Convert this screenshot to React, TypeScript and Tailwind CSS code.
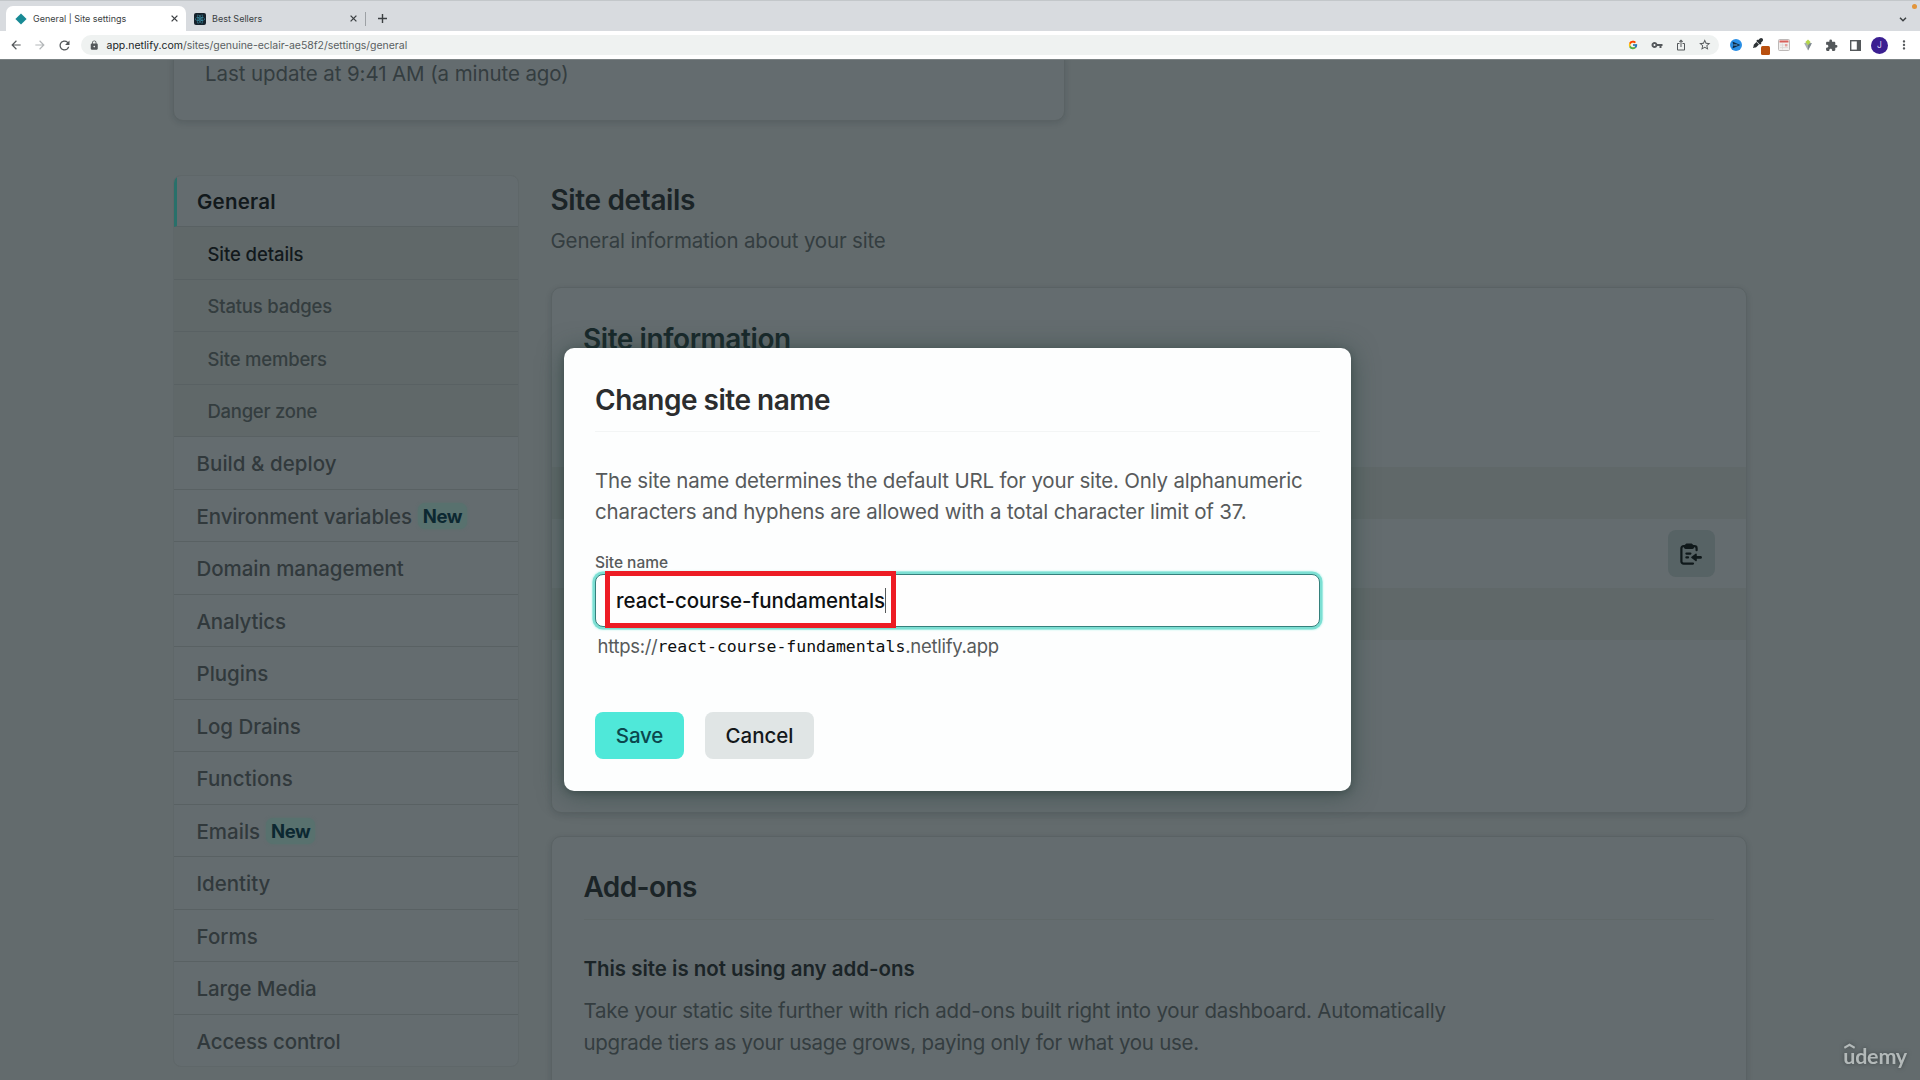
import React from 'react';
import {
  MdArrowBack,
  MdArrowForward,
  MdRefresh,
  MdLock,
  MdVpnKey,
  MdIosShare,
  MdStarBorder,
  MdExtension,
  MdMoreVert,
} from 'react-icons/md';
import { FcGoogle } from 'react-icons/fc';
import { FaReact, FaEyeDropper } from 'react-icons/fa';

type NavItem = { label: string; tracking: string; badge?: boolean };

const subItems: NavItem[] = [
  { label: 'Status badges', tracking: 'tracking-[-0.0105em]' },
  { label: 'Site members', tracking: 'tracking-[-0.0105em]' },
  { label: 'Danger zone', tracking: 'tracking-[-0.0148em]' },
];

const items: NavItem[] = [
  { label: 'Build & deploy', tracking: 'tracking-[0.002em]' },
  { label: 'Environment variables', tracking: 'tracking-[-0.0057em]', badge: true },
  { label: 'Domain management', tracking: 'tracking-[-0.0025em]' },
  { label: 'Analytics', tracking: 'tracking-[-0.009em]' },
  { label: 'Plugins', tracking: 'tracking-[-0.001em]' },
  { label: 'Log Drains', tracking: 'tracking-[-0.003em]' },
  { label: 'Functions', tracking: 'tracking-[0.003em]' },
  { label: 'Emails', tracking: 'tracking-[0em]', badge: true },
  { label: 'Identity', tracking: 'tracking-[-0.001em]' },
  { label: 'Forms', tracking: 'tracking-[0.002em]' },
  { label: 'Large Media', tracking: 'tracking-[-0.0052em]' },
  { label: 'Access control', tracking: 'tracking-[-0.0076em]' },
];

function CloseIcon() {
  return (
    <svg className="size-[7px]" viewBox="0 0 7 7" stroke="#3c4043" strokeWidth="1.3">
      <path d="M0.6 0.6 6.4 6.4M6.4 0.6 0.6 6.4" />
    </svg>
  );
}

function TabStrip() {
  return (
    <div className="flex h-[31px] items-end border-t border-[#c3c7ca] bg-[#d8dbdf] pl-[6px] text-[9px] text-[#3a3e42]">
      <div className="flex h-[25px] w-[180px] items-center rounded-t-[7px] bg-white pr-[8px] pl-[9px]">
        <svg className="size-[12px]" viewBox="0 0 12 12">
          <path d="M6 0.4 11.6 6 6 11.6 0.4 6Z" fill="#188a95" />
        </svg>
        <span className="ml-[6px] flex-1 whitespace-nowrap">General | Site settings</span>
        <CloseIcon />
      </div>
      <div className="flex h-[25px] w-[179px] items-center pr-[8px] pl-[8px]">
        <span className="flex size-[12px] items-center justify-center rounded-[2px] bg-[#16212b]">
          <FaReact className="size-[10px] text-[#3f9fb8]" />
        </span>
        <span className="ml-[6px] flex-1">Best Sellers</span>
        <CloseIcon />
      </div>
      <div className="mb-[5px] h-[14px] w-px bg-[#9da1a5]" />
      <svg className="mb-[8px] ml-[12px] size-[9px]" viewBox="0 0 9 9" stroke="#3c4043" strokeWidth="1.4">
        <path d="M4.5 0V9M0 4.5H9" />
      </svg>
      <div className="ml-auto flex h-[29px] w-[24px] flex-col items-center pt-[2px]">
        <span className="ml-[13px] size-[5px] rounded-full bg-[#e2953a]" />
        <svg className="mt-[8px] mr-[10px] h-[5px] w-[8px]" viewBox="0 0 8 5" fill="none" stroke="#3c4043" strokeWidth="1.5">
          <path d="M1 0.8 4 3.8 7 0.8" />
        </svg>
      </div>
    </div>
  );
}

function Cell({ children }: { children: React.ReactNode }) {
  return <div className="flex w-[24px] items-center justify-center">{children}</div>;
}

function Toolbar() {
  return (
    <div className="flex h-[28px] items-center bg-white pl-[4px] text-[#54585b]">
      <Cell>
        <MdArrowBack className="size-[14px]" />
      </Cell>
      <Cell>
        <MdArrowForward className="size-[14px] text-[#b4b7b9]" />
      </Cell>
      <Cell>
        <MdRefresh className="size-[15px]" />
      </Cell>
      <div className="ml-[5px] flex h-[20px] w-[1638px] items-center rounded-full bg-[#eff2f1] pr-[2px] pl-[8px]">
        <MdLock className="size-[10.5px]" />
        <p className="ml-[7px] flex-1 pt-px text-[10.5px] leading-[20px] text-[#5a5f62]">
          <span className="text-[#202427]">app.netlify.com</span>
          <span className="tracking-[-0.0035em]">/sites/genuine-eclair-ae58f2/settings/general</span>
        </p>
        <Cell>
          <FcGoogle className="size-[10px]" />
        </Cell>
        <Cell>
          <MdVpnKey className="size-[12px]" />
        </Cell>
        <Cell>
          <MdIosShare className="size-[12px]" />
        </Cell>
        <Cell>
          <MdStarBorder className="size-[13.5px]" />
        </Cell>
      </div>
      <div className="ml-[4.5px] flex h-full">
        <Cell>
          <svg className="size-[12px]" viewBox="0 0 12 12">
            <circle cx="6" cy="6" r="6" fill="#2a8fe6" />
            <path d="M2.4 2.4 10.4 6 2.4 9.6 3.4 6Z" fill="#0f2a44" />
            <path d="M3.6 6H7.4" stroke="#5fb0f0" strokeWidth="1" />
          </svg>
        </Cell>
        <Cell>
          <div className="relative size-[14px]">
            <FaEyeDropper className="size-[10px] text-[#2e3336]" />
            <span className="absolute top-[8px] left-[8px] size-[9px] rounded-[1.5px] bg-[#b9500f]" />
          </div>
        </Cell>
        <Cell>
          <svg className="size-[12px]" viewBox="0 0 12 12">
            <rect x="0.5" y="0.5" width="11" height="11" rx="1" fill="#f1efee" stroke="#bdb9b8" />
            <rect x="1.5" y="1.5" width="9" height="2" fill="#d8605a" />
            <path d="M2 6H10M2 8.5H10M4.5 4.5V10.5" stroke="#dcd7d4" strokeWidth="0.8" />
            <rect x="7" y="5" width="2.4" height="2.4" fill="#e6a19c" />
          </svg>
        </Cell>
        <Cell>
          <svg className="size-[12px]" viewBox="0 0 12 12">
            <path d="M6 3 9.8 4.2 6 11.6 2.2 4.2Z" fill="#a8b0b4" />
            <path d="M6 4.6V11.6L9.8 4.2Z" fill="#7f898e" />
            <path d="M6 0.6 8.6 3 6 6.2 3.4 3Z" fill="#b5d64a" />
          </svg>
        </Cell>
        <Cell>
          <MdExtension className="size-[13px]" />
        </Cell>
        <Cell>
          <svg className="size-[11px]" viewBox="0 0 11 11">
            <rect x="0.7" y="0.7" width="9.6" height="9.6" fill="none" stroke="#54585b" strokeWidth="1.4" />
            <rect x="6.8" y="0.7" width="3.5" height="9.6" fill="#54585b" />
          </svg>
        </Cell>
        <Cell>
          <span className="flex size-[17px] items-center justify-center rounded-full bg-[#3b1f91] text-[8.5px] text-[#d8d0f0]">
            J
          </span>
        </Cell>
        <Cell>
          <MdMoreVert className="size-[14px]" />
        </Cell>
      </div>
    </div>
  );
}

function Badge() {
  return (
    <span className="-mt-[2px] ml-[6px] flex h-[26px] items-center rounded-[7px] bg-[#58716e] px-[5px] pt-px text-[18.5px] font-bold tracking-[-0.0235em] text-[#0c2831] shadow-[0_0_3px_#58716e]">
      New
    </span>
  );
}

function Sidebar() {
  return (
    <nav className="w-[346px] shrink-0 overflow-hidden rounded-[8px] border border-[#5f6769] bg-[#646c6f]">
      <div className="flex h-[51.5px] items-center border-b border-l-[3px] border-b-[#596163] border-l-[#29706a] pt-[3px] pl-[20px] text-[20.5px] font-semibold tracking-[0.012em] text-[#12191c]">
        General
      </div>
      <div className="flex h-[52.5px] items-center border-b border-[#596163] bg-[#606869] pt-[4px] pl-[33.5px] text-[18.5px] font-medium tracking-[-0.0046em] text-[#12191c]">
        Site details
      </div>
      {subItems.map((item) => (
        <div
          key={item.label}
          className={`flex h-[52.5px] items-center border-b border-[#596163] bg-[#606869] pt-[3.5px] pl-[33.5px] text-[18.5px] font-medium text-[#343d3f] ${item.tracking}`}
        >
          {item.label}
        </div>
      ))}
      {items.map((item) => (
        <div
          key={item.label}
          className={`flex h-[52.5px] items-center border-b border-[#596163] pt-[4px] pl-[22.5px] text-[20.5px] font-medium text-[#31393c] last:h-[51.5px] last:border-b-0 ${item.tracking}`}
        >
          {item.label}
          {item.badge && <Badge />}
        </div>
      ))}
    </nav>
  );
}

function ClipboardIcon() {
  return (
    <svg className="size-[22px]" viewBox="0 0 22 22" fill="none" stroke="#10191b" strokeWidth="2.2" strokeLinecap="round" strokeLinejoin="round">
      <path d="M5 3.2H3.6A2.2 2.2 0 0 0 1.4 5.4V18.4A2.2 2.2 0 0 0 3.6 20.6H13" />
      <path d="M12.6 3.2H14.4A2.2 2.2 0 0 1 16.6 5.4V7.2" />
      <path d="M6.4 0.4H11.6L14 2.4V4.2Q14 6 12.4 6H5.6Q4 6 4 4.2V2.4Z" fill="#10191b" stroke="none" />
      <path d="M6.4 10.6H10.4M6.4 14.4H8" />
      <path d="M15 14.4H20.6" strokeWidth="2.6" />
      <path d="M16 11.4 12 14.4 16 17.4Z" fill="#10191b" strokeWidth="1.6" />
    </svg>
  );
}

function Details() {
  return (
    <main className="ml-[31.5px] w-[1196px] shrink-0 pt-[4px]">
      <h2 className="text-[28px] leading-[43px] font-semibold tracking-[-0.0131em] text-[#1b2427]">Site details</h2>
      <p className="mt-[3px] text-[20.5px] leading-[31.5px] tracking-[-0.0085em] text-[#343d40]">
        General information about your site
      </p>
      <section className="mt-[31px] h-[526px] rounded-[10px] border border-[#5a6264] bg-[#646c6f] pt-[30px] shadow-[0_2px_6px_rgba(14,30,37,0.14)]">
        <h3 className="pl-[31.5px] text-[28px] leading-[42px] font-semibold tracking-[-0.0153em] text-[#18282a]">
          Site information
        </h3>
        <div className="mt-[107px] h-[52px] bg-[#606869]" />
        <div className="flex h-[69px] items-center justify-end pr-[31px]">
          <div className="flex size-[47px] items-center justify-center rounded-[8px] bg-[#576365]">
            <ClipboardIcon />
          </div>
        </div>
        <div className="h-[52px] bg-[#606869]" />
      </section>
      <section className="mt-[22.5px] h-[300px] rounded-[10px] border border-[#5a6264] bg-[#646c6f] px-[32px] pt-[29.5px] shadow-[0_2px_6px_rgba(14,30,37,0.14)]">
        <h3 className="border-b border-[#606869] pb-[10px] text-[28px] leading-[43px] font-semibold tracking-[-0.0214em] text-[#1b2427]">
          Add-ons
        </h3>
        <p className="mt-[32.5px] text-[20.5px] leading-[31.5px] font-semibold tracking-[-0.0013em] text-[#1b2427]">
          This site is not using any add-ons
        </p>
        <p className="mt-[11px] text-[20.5px] leading-[31.5px] whitespace-nowrap text-[#343d40]">
          <span className="tracking-[-0.01em]">
            Take your static site further with rich add-ons built right into your dashboard. Automatically
          </span>
          <br />
          <span className="tracking-[-0.0135em]">upgrade tiers as your usage grows, paying only for what you use.</span>
        </p>
      </section>
    </main>
  );
}

function ChangeNameDialog() {
  return (
    <div className="absolute top-[348px] left-[563.5px] h-[442.5px] w-[787.5px] rounded-[10px] bg-[#fdfefe] px-[31.5px] pt-[31px] shadow-[0_3px_26px_rgba(40,66,60,0.6),0_2px_6px_rgba(40,56,54,0.4)]">
      <h2 className="border-b border-[#f3f5f5] pb-[9px] text-[28px] leading-[43px] font-semibold tracking-[-0.0178em] text-[#2b2d2e]">
        Change site name
      </h2>
      <p className="mt-[32.5px] text-[20.5px] leading-[31.5px] whitespace-nowrap text-[#575a5b]">
        <span className="tracking-[-0.0095em]">
          The site name determines the default URL for your site. Only alphanumeric
        </span>
        <br />
        <span className="tracking-[-0.0092em]">
          characters and hyphens are allowed with a total character limit of 37.
        </span>
      </p>
      <p className="mt-[22px] pt-px text-[15.5px] leading-[24px] font-medium tracking-[-0.002em] text-[#575a5b]">Site name</p>
      <div className="relative -mt-[0.5px] flex h-[52.5px] items-center rounded-[8px] border border-[#35807c] bg-[#fefefe] pl-[20px] shadow-[0_0_0_2.5px_#7cdfd3,0_0_2px_3px_#b9f3ec]">
        <span className="pt-px text-[20.5px] leading-[28px] font-medium tracking-[-0.0032em] text-[#0f1112]">
          react-course-fundamentals
        </span>
        <span className="h-[25px] w-px bg-[#55595a]" />
        <div className="absolute -top-[4px] left-[9px] h-[57px] w-[291px] border-[5px] border-[#ed1c24]" />
      </div>
      <p className="mt-[5.5px] flex pl-[2.5px] text-[18.5px] leading-[28px] text-[#575a5b]">
        <span className="tracking-[-0.0168em]">https://</span>
        <span className="pt-px font-['DejaVu_Sans_Mono',monospace] text-[16.5px] tracking-[-0.001em] text-[#0c0e0f]">
          react-course-fundamentals
        </span>
        <span className="tracking-[-0.0154em]">.netlify.app</span>
      </p>
      <div className="mt-[50.5px] flex gap-[21px] text-[20.5px] font-medium">
        <div className="flex h-[47px] w-[89px] items-center justify-center rounded-[8px] bg-[#4fe8d9] pt-[2px] tracking-[-0.0074em] text-[#0b474d]">
          Save
        </div>
        <div className="flex h-[47px] w-[109px] items-center justify-center rounded-[8px] bg-[#e0e5e5] pt-[2px] text-[#14181a]">
          Cancel
        </div>
      </div>
    </div>
  );
}

function Watermark() {
  return (
    <div className="absolute right-[13px] bottom-[12px] flex h-[27px] items-end text-[#b3b9b9] drop-shadow-[0_0_2px_rgba(50,58,60,0.8)]">
      <svg className="absolute top-[2px] left-[1px] h-[6px] w-[11px]" viewBox="0 0 11 6" fill="none" stroke="currentColor" strokeWidth="2.2">
        <path d="M0.3 4.8 5.5 1.8 10.7 4.8" />
      </svg>
      <span className="font-['Lato',sans-serif] text-[21.5px] leading-[23px] font-bold tracking-[-0.01em]">udemy</span>
    </div>
  );
}

export default function App() {
  return (
    <div className="relative flex h-[1080px] w-[1920px] flex-col overflow-hidden bg-[#636b6d] font-['Inter',sans-serif]">
      <TabStrip />
      <Toolbar />
      <div className="h-[1021px] overflow-hidden border-t border-[#7b8284] pl-[173px]">
        <div className="-mt-[10px] h-[70.5px] w-[891.5px] rounded-[10px] border border-[#5a6264] bg-[#646c6f] pt-[7px] pl-[31px] text-[20.5px] leading-[31.5px] tracking-[-0.0045em] text-[#343d40] shadow-[0_2px_6px_rgba(14,30,37,0.14)]">
          Last update at 9:41 AM (a minute ago)
        </div>
        <div className="mt-[54px] flex items-start">
          <Sidebar />
          <Details />
        </div>
      </div>
      <ChangeNameDialog />
      <Watermark />
    </div>
  );
}
